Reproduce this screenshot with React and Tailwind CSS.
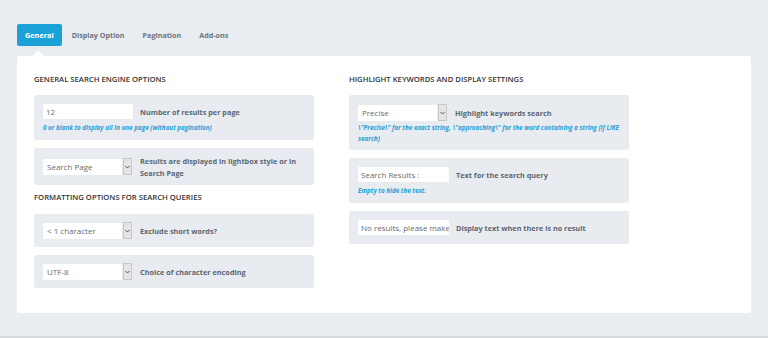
import React from "react";

const font = { fontFamily: '"Open Sans", "Liberation Sans", sans-serif' };

function Arrow() {
  return (
    <div className="w-[9px] h-[17px] ml-[1px] bg-[#e4e4e4] border border-[#c8c8c8] flex items-center justify-center">
      <svg width="5" height="4" viewBox="0 0 5 4">
        <path d="M0.5 1 L2.5 3 L4.5 1" fill="none" stroke="#555" strokeWidth="1" />
      </svg>
    </div>
  );
}

function Select({ value, w = "w-[79px]" }) {
  return (
    <div className="flex items-center shrink-0">
      <div className={`${w} h-[16px] bg-white flex items-center pl-[4px] text-[8px] text-[#6b6b6b] whitespace-nowrap overflow-hidden`}>
        {value}
      </div>
      <Arrow />
    </div>
  );
}

function Input({ value, w = "w-[90px]" }) {
  return (
    <div className={`${w} h-[15px] bg-white flex items-center pl-[3px] text-[8px] text-[#6b6b6b] whitespace-nowrap overflow-hidden shrink-0`}>
      <span className="block overflow-hidden">{value}</span>
    </div>
  );
}

function Box({ children, className = "" }) {
  return <div className={`bg-[#e8ecf0] rounded-[2px] px-[9px] ${className}`}>{children}</div>;
}

function Label({ children }) {
  return <div className="text-[7.3px] leading-[12px] font-bold text-[#5d6573]">{children}</div>;
}

function Hint({ children, className = "" }) {
  return <div className={`text-[6.3px] leading-[11px] italic font-bold text-[#1fa0d8] ${className}`}>{children}</div>;
}

function Heading({ children, className = "" }) {
  return <div className={`text-[7.7px] leading-[10px] font-semibold text-[#333] uppercase ${className}`}>{children}</div>;
}

export default function App() {
  return (
    <div style={font} className="w-[768px] h-[338px] bg-[#e9edf1] border-b-2 border-[#d6dadf] overflow-hidden">
      <div className="pl-[17px] pt-[24px] flex items-center h-[46px]">
        <div className="h-[22px] px-[8px] bg-[#1aa1d8] rounded-[2px] flex items-center text-white text-[7.3px] font-bold">
          General
        </div>
        <div className="ml-[10px] text-[7.2px] font-bold text-[#6d7380]">Display Option</div>
        <div className="ml-[18px] text-[7.2px] font-bold text-[#6d7380]">Pagination</div>
        <div className="ml-[18px] text-[7.2px] font-bold text-[#6d7380]">Add-ons</div>
      </div>
      <div className="relative ml-[17px] mt-[10px] w-[734px] h-[257px] bg-white rounded-[2px] pt-[18px] px-[17px] flex gap-[35px]">
        <div className="absolute left-[17px] -top-[4px] w-[8px] h-[8px] bg-white rotate-45" />
        <div className="w-[280px]">
          <Heading className="mb-[11px]">General search engine options</Heading>
          <Box className="h-[45px] pt-[9px]">
            <div className="flex items-center gap-[7px]">
              <Input value="12" />
              <Label>Number of results per page</Label>
            </div>
            <Hint className="mt-[3px]">0 or blank to display all in one page (without pagination)</Hint>
          </Box>
          <Box className="h-[37px] mt-[8px] flex items-center gap-[8px]">
            <Select value="Search Page" />
            <Label>Results are displayed in lightbox style or in Search Page</Label>
          </Box>
          <Heading className="mt-[7px] mb-[12px]">Formatting options for search queries</Heading>
          <Box className="h-[33px] flex items-center gap-[8px]">
            <Select value="< 1 character" />
            <Label>Exclude short words?</Label>
          </Box>
          <Box className="h-[33px] mt-[8px] flex items-center gap-[8px]">
            <Select value="UTF-8" />
            <Label>Choice of character encoding</Label>
          </Box>
        </div>
        <div className="w-[280px]">
          <Heading className="mb-[11px]">Highlight keywords and display settings</Heading>
          <Box className="h-[55px] pt-[9px]">
            <div className="flex items-center gap-[8px]">
              <Select value="Precise" />
              <Label>Highlight keywords search</Label>
            </div>
            <Hint className="mt-[1px]">\"Precise\" for the exact string, \"approaching\" for the word containing a string (if LIKE search)</Hint>
          </Box>
          <Box className="h-[45px] mt-[8px] pt-[9px]">
            <div className="flex items-center gap-[7px]">
              <Input value="Search Results :" w="w-[91px]" />
              <Label>Text for the search query</Label>
            </div>
            <Hint className="mt-[3px]">Empty to hide the text.</Hint>
          </Box>
          <Box className="h-[33px] mt-[8px] flex items-center gap-[7px]">
            <Input value="No results, please make" w="w-[91px]" />
            <Label>Display text when there is no result</Label>
          </Box>
        </div>
      </div>
    </div>
  );
}
